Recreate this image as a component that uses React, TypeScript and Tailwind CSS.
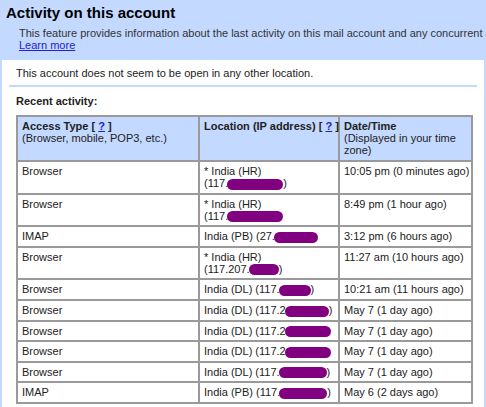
import React from "react";

const Blob = ({ w }: { w: number }) => (
  <span className="inline-block h-[11px] rounded-full bg-[#800080] align-middle -ml-[1px]" style={{ width: w }} />
);

type Row = { t: string; loc: React.ReactNode; d: string };
const rows: Row[] = [
  { t: "Browser", loc: <>* India (HR)<br />(117.<Blob w={56} />)</>, d: "10:05 pm (0 minutes ago)" },
  { t: "Browser", loc: <>* India (HR)<br />(117.<Blob w={56} /></>, d: "8:49 pm (1 hour ago)" },
  { t: "IMAP", loc: <>India (PB) (27.<Blob w={44} /></>, d: "3:12 pm (6 hours ago)" },
  { t: "Browser", loc: <>* India (HR)<br />(117.207.<Blob w={30} />)</>, d: "11:27 am (10 hours ago)" },
  { t: "Browser", loc: <>India (DL) (117.<Blob w={32} />)</>, d: "10:21 am (11 hours ago)" },
  { t: "Browser", loc: <>India (DL) (117.2<Blob w={44} />)</>, d: "May 7 (1 day ago)" },
  { t: "Browser", loc: <>India (DL) (117.2<Blob w={46} /></>, d: "May 7 (1 day ago)" },
  { t: "Browser", loc: <>India (DL) (117.2<Blob w={46} /></>, d: "May 7 (1 day ago)" },
  { t: "Browser", loc: <>India (DL) (117.<Blob w={48} />)</>, d: "May 7 (1 day ago)" },
  { t: "IMAP", loc: <>India (PB) (117.<Blob w={48} />)</>, d: "May 6 (2 days ago)" },
];

const td = "border-2 border-[#9a9a9a] px-[4px] pt-[3px] pb-[3px] align-top";

export default function App() {
  return (
    <div className="w-[486px] h-[407px] bg-[#c3d9ff] text-[11px] leading-[12px] text-[#222] overflow-hidden" style={{ fontFamily: '"Liberation Sans", Arial, sans-serif' }}>
      <div className="px-[6px] pt-[5px] h-[60px]">
        <div className="text-[15px] leading-[16px] font-bold text-black">Activity on this account</div>
        <div className="pl-[13px] mt-[6px] text-[#333] whitespace-nowrap">This feature provides information about the last activity on this mail account and any concurrent activity.</div>
        <div className="pl-[13px]"><a className="text-[#2222cc] underline">Learn more</a></div>
      </div>
      <div className="mx-[2px] bg-white h-[347px] pt-[7px]">
        <div className="px-[14px] pb-[6px]">This account does not seem to be open in any other location.</div>
        <div className="mx-[7px] h-[2px] bg-[#c3d9ff]" />
        <div className="px-[14px] mt-[8px] font-bold">Recent activity:</div>
        <table className="ml-[14px] mt-[8px] w-[457px] border-collapse border-2 border-[#9a9a9a] table-fixed">
          <thead>
            <tr className="bg-[#c3d9ff]">
              <td className={td + " w-[182px] h-[45px]"}><b>Access Type [ <a className="text-[#2222cc] underline">?</a> ]</b><br />(Browser, mobile, POP3, etc.)</td>
              <td className={td + " w-[140px]"}><b className="whitespace-nowrap">Location (IP address) [ <a className="text-[#2222cc] underline">?</a> ]</b></td>
              <td className={td}><b>Date/Time</b><br />(Displayed in your time zone)</td>
            </tr>
          </thead>
          <tbody>
            {rows.map((r, i) => (
              <tr key={i}>
                <td className={td}>{r.t}</td>
                <td className={td + " whitespace-nowrap"}>{r.loc}</td>
                <td className={td + " whitespace-nowrap"}>{r.d}</td>
              </tr>
            ))}
          </tbody>
        </table>
        <div className="mx-[7px] mt-[6px] h-[2px] bg-[#c3d9ff]" />
      </div>
    </div>
  );
}
